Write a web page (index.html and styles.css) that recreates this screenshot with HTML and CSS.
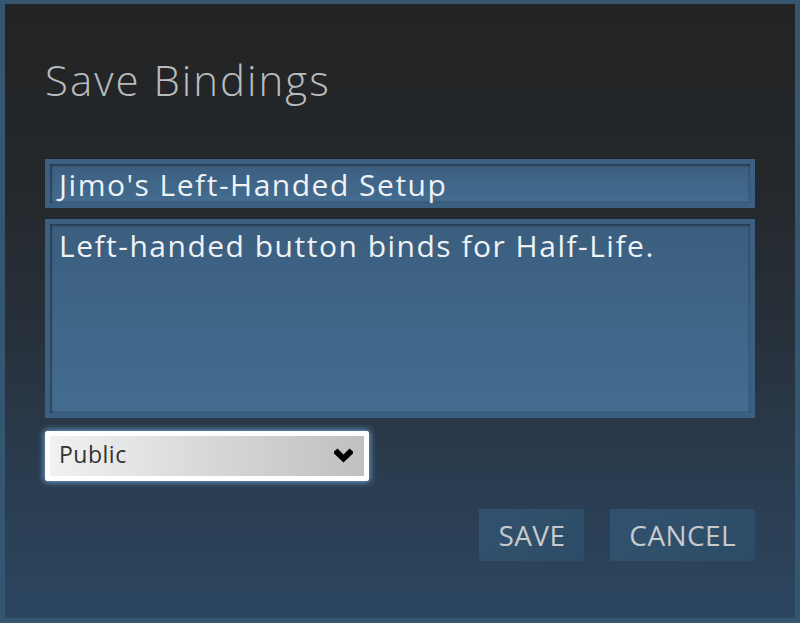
FILE: index.html
```html
<!DOCTYPE html>
<html>
<head>
<meta charset="utf-8">
<link rel="stylesheet" href="styles.css">
</head>
<body>
<div class="dialog">
  <h1 class="title">Save Bindings</h1>
  <div class="field field-name">Jimo's Left-Handed Setup</div>
  <div class="field field-desc">Left-handed button binds for Half-Life.</div>
  <div class="select">
    <span class="select-label">Public</span>
    <svg class="chevron" width="19" height="15" viewBox="0 0 19 15"><path d="M0 5.5 L0 3.5 L3.5 0.5 L9.5 6.5 L15.5 0.5 L19 3.5 L19 5.5 L9.5 14.5 Z" fill="#000"/></svg>
  </div>
  <div class="actions">
    <button class="btn">SAVE</button>
    <button class="btn">CANCEL</button>
  </div>
</div>
</body>
</html>
```
FILE: styles.css
```css
html, body {
  margin: 0;
  padding: 0;
  width: 800px;
  height: 623px;
  overflow: hidden;
}
body {
  font-family: "Open Sans", "Noto Sans", sans-serif;
}
.dialog {
  box-sizing: border-box;
  width: 800px;
  height: 623px;
  border: 5px solid #345670;
  border-top-width: 4px;
  background: linear-gradient(to bottom, #222324 0%, #24272a 25%, #272f38 50%, #2a3b4e 75%, #2c4660 100%);
  padding: 0 40px;
  display: flex;
  flex-direction: column;
}
.title {
  margin: 52px 0 0;
  font-size: 42px;
  line-height: 48px;
  font-weight: 300;
  color: #b9bcbf;
  letter-spacing: 2px;
}
.field {
  box-sizing: border-box;
  border: 5px solid #3b6081;
  background: linear-gradient(to bottom, #3b5e7e, #446d91);
  box-shadow: inset 2px 2px 2px rgba(0, 0, 0, 0.35), inset -1px -1px 2px rgba(0, 0, 0, 0.25);
  color: #eef2f5;
  font-size: 30px;
  line-height: 36px;
  letter-spacing: 1.5px;
  padding: 3px 9px 0;
}
.field-name {
  margin-top: 55px;
  height: 49px;
}
.field-desc {
  margin-top: 11px;
  height: 199px;
  padding-top: 4px;
}
.select {
  box-sizing: border-box;
  margin-top: 13px;
  width: 324px;
  height: 50px;
  border: 5px solid #ffffff;
  border-radius: 2px;
  background: linear-gradient(to right, #f1f1f1, #d2d4d3 60%, #bfc1c0);
  box-shadow: 0 0 6px 1px rgba(120, 180, 225, 0.85);
  display: flex;
  align-items: center;
  justify-content: space-between;
  padding: 0 11px 0 9px;
}
.select-label {
  font-size: 23px;
  line-height: 36px;
  letter-spacing: 0.5px;
  color: #333;
  padding-bottom: 4px;
}
.chevron {
  display: block;
  margin-top: -1px;
}
.actions {
  margin-top: 28px;
  display: flex;
  justify-content: flex-end;
  gap: 26px;
}
.btn {
  height: 52px;
  padding: 0 19px;
  border: none;
  background: linear-gradient(135deg, #31526f, #2d4b66);
  color: #c6cacd;
  font-family: "Open Sans", "Noto Sans", sans-serif;
  font-size: 28px;
  line-height: 52px;
  letter-spacing: 0.4px;
}
```
